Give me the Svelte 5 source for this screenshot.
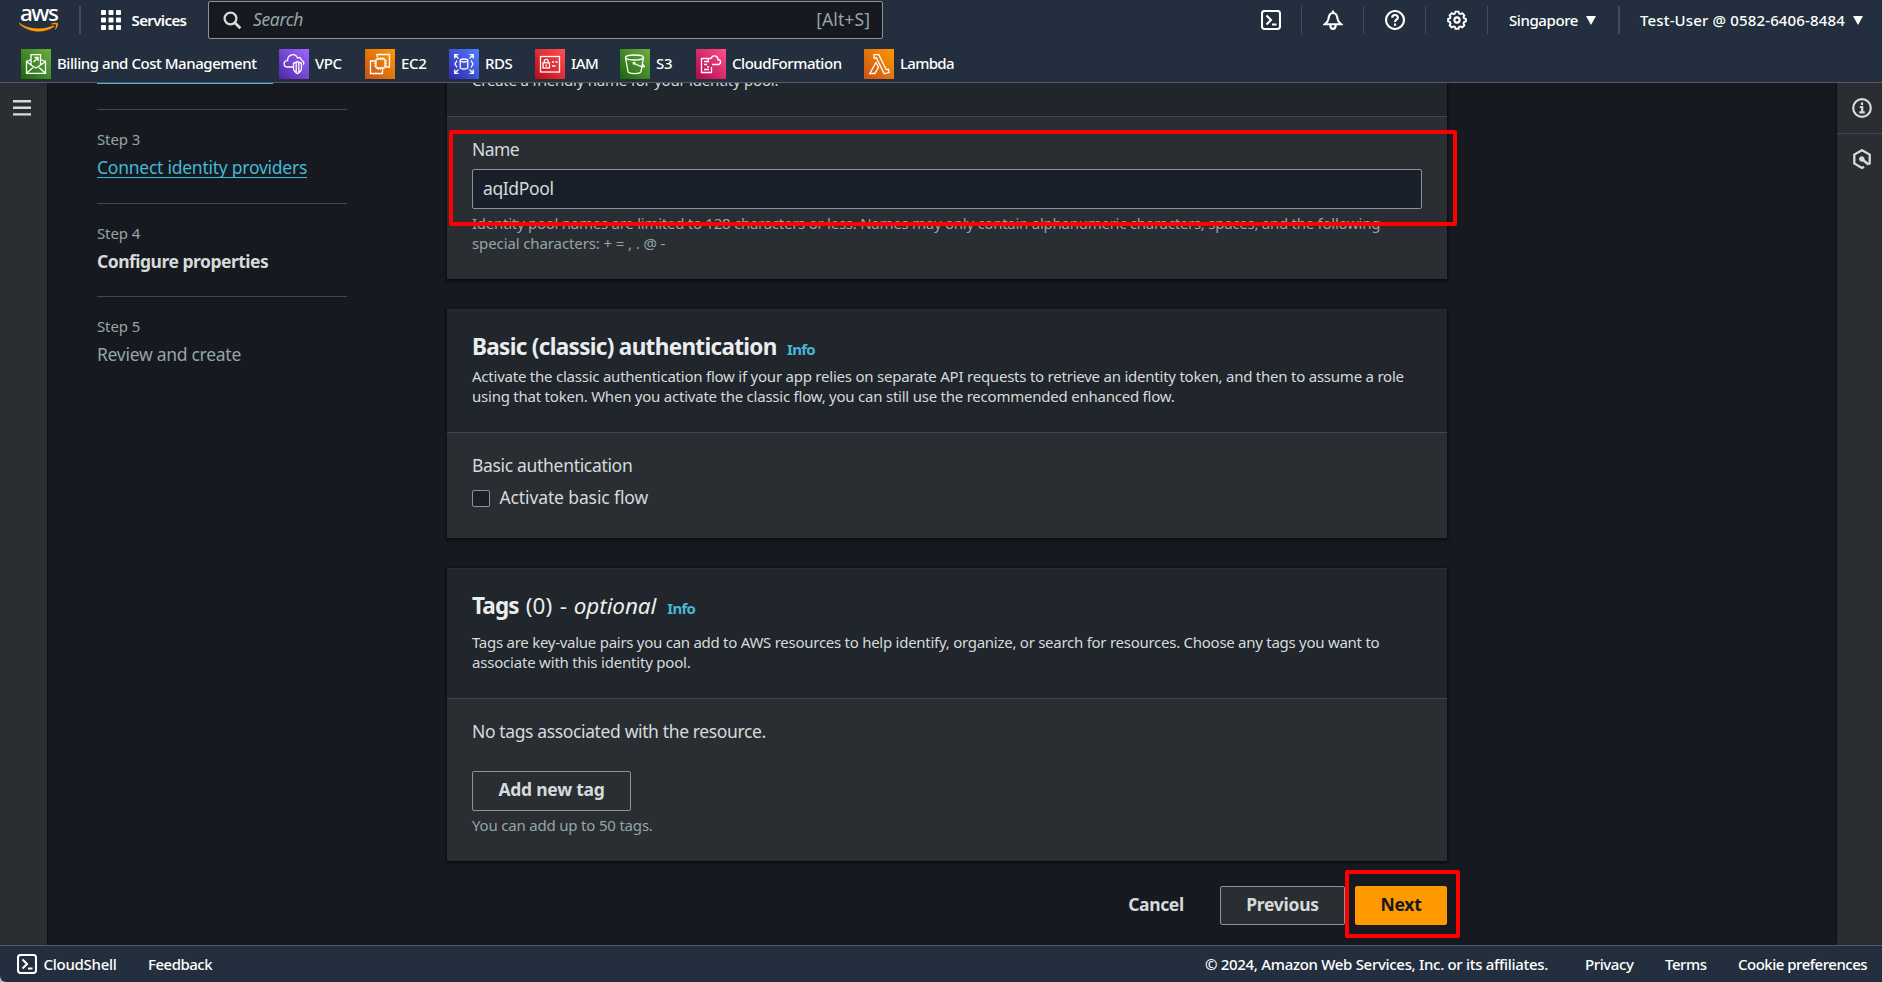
<script>
  const favorites = [
    { id: 'billing', label: 'Billing and Cost Management', width: 200, ls: -0.45, from: '#1b660f', to: '#6cae3e' },
    { id: 'vpc', label: 'VPC', width: 28, ls: -0.4, from: '#4d27a8', to: '#a166ff' },
    { id: 'ec2', label: 'EC2', width: 26, ls: -0.3, from: '#c8511b', to: '#ff9900' },
    { id: 'rds', label: 'RDS', width: 28, ls: -0.5, from: '#2e27ad', to: '#527fff' },
    { id: 'iam', label: 'IAM', width: 27, ls: -0.6, from: '#bd0816', to: '#ff5252' },
    { id: 's3', label: 'S3', width: 18, ls: -0.2, from: '#1b660f', to: '#6cae3e' },
    { id: 'cfn', label: 'CloudFormation', width: 110, ls: -0.46, from: '#b0084d', to: '#ff4f8b' },
    { id: 'lambda', label: 'Lambda', width: 54, ls: -0.7, from: '#c8511b', to: '#ff9900' }
  ];
  const steps = [
    { label: '', title: 'Configure permissions', kind: 'link', ls: -0.45, height: 94 },
    { label: 'Step 3', title: 'Connect identity providers', kind: 'link', ls: -0.25, height: 94 },
    { label: 'Step 4', title: 'Configure properties', kind: 'current', ls: -0.5, height: 93 },
    { label: 'Step 5', title: 'Review and create', kind: 'pending', ls: -0.28, height: 93 }
  ];
  let poolName = $state('aqIdPool');
  let basicFlow = $state(false);
</script>

{#snippet shellIcon()}
  <svg class="stroke" width="20" height="20" viewBox="0 0 20 20"><rect x="1" y="1" width="18" height="18" rx="2.5" /><path d="M5.500 5.500l4.500 4.500-4.500 4.500M11 14.500h4.500" /></svg>
{/snippet}

<div class="page">
  <header>
    <div class="topbar">
      <div class="logo">
        <span>aws</span>
        <svg width="40" height="11" viewBox="0 0 40 11"><path d="M.4 1.1C6 4.800 12.500 6.600 19.500 6.600c5 0 10.300-1 15-3 .9-.3 1.400.6.6 1.200C31 8 25 9.500 19.800 9.500 12.500 9.500 5.500 6.700.2 1.900c-.4-.5-.2-1 .2-.8z" fill="#f90" /><path d="M37 2.700c-.6-.7-3.500-.4-4.700-.2-.5 0-.5-.4-.1-.7 2.400-1.600 6.200-1.100 6.600-.6.500.6-.1 4.500-2.300 6.300-.4.300-.7.100-.5-.3.500-1.200 1.600-3.800 1-4.500z" fill="#f90" /></svg>
      </div>
      <div class="services">
        <svg width="20" height="20" viewBox="0 0 20 20" fill="#fff">
          {#each [0, 7.5, 15] as y}{#each [0, 7.5, 15] as x}<rect {x} {y} width="5" height="5" rx=".8" />{/each}{/each}
        </svg>
        <span>Services</span>
      </div>
      <div class="search">
        <svg width="19" height="19" viewBox="0 0 19 19" fill="none" stroke="#d5dbdb" stroke-width="2.300"><circle cx="7.500" cy="7.500" r="5.900" /><path d="M11.800 11.800l5.600 5.400" stroke-width="2.800" /></svg>
        <em>Search</em>
        <span class="keys">[Alt+S]</span>
      </div>
      <div class="tools">
        <span class="tool">{@render shellIcon()}</span>
        <span class="tool"><svg class="stroke" width="20" height="20" viewBox="0 0 20 20"><path d="M10 .5v2M2 14.200h16c-1.800-1.200-3-2.600-3.400-5C14.200 5.500 13 3 10 3S5.800 5.500 5.400 9.200c-.4 2.400-1.600 3.800-3.400 5z" /><path d="M7.300 15c0 5.200 5.400 5.200 5.400 0" /></svg></span>
        <span class="tool"><svg class="stroke" width="20" height="20" viewBox="0 0 20 20"><circle cx="10" cy="10" r="9" /><path d="M7.200 7.700c0-3.500 5.700-3.500 5.700-.2 0 2.200-2.900 2.200-2.900 4.500M10 13.500v2.200" /></svg></span>
        <span class="tool"><svg class="stroke" width="20" height="20" viewBox="0 0 20 20"><path d="M8.300 1h3.400l.6 2.100 1.600.6 2-1 2.300 2.400-1 1.900.7 1.600 2 .5v2.800l-2 .7-.7 1.600 1 2-2.300 2.300-2-1-1.600.6-.6 2H8.300l-.6-2-1.600-.6-2 1-2.300-2.300 1-2-.7-1.600-2-.7V9.100l2-.5.7-1.600-1-1.900 2.300-2.400 2 1 1.600-.6z" transform="translate(1 .7) scale(.9)" /><circle cx="10" cy="10" r="2.600" /></svg></span>
        <span class="region">Singapore<svg width="10" height="9" viewBox="0 0 10 9"><path d="M0 0h10L5 9z" fill="#fff" /></svg></span>
        <span class="account">Test-User @ 0582-6406-8484<svg width="10" height="9" viewBox="0 0 10 9"><path d="M0 0h10L5 9z" fill="#fff" /></svg></span>
      </div>
    </div>
    <nav class="favorites">
      {#each favorites as f}
        <a href="#{f.id}">
          <svg width="30" height="30" viewBox="0 0 30 30" fill="none" stroke="#fff" stroke-width="1.300">
            <defs><linearGradient id="g-{f.id}" x1="0" y1="1" x2="1" y2="0"><stop stop-color={f.from} /><stop offset="1" stop-color={f.to} /></linearGradient></defs>
            <rect width="30" height="30" fill="url(#g-{f.id})" stroke="none" />
            {#if f.id === 'billing'}
              <path d="M10 16V5.700h9.500V16M5.500 12.500v11.800h19V12.500L19.500 16l-4.500 3-5-3zM5.500 24.300L12 18.500M24.500 24.300L18 18.500M10 10.500l-4.500 2M19.500 10.500l5 2M12.500 13l4.500-4.500M13.500 8.500H17V12" />
            {:else if f.id === 'vpc'}
              <path d="M14.500 18H8.800C3.700 17.800 4.200 11.500 8.600 11.600 8.400 5 16.500 3.500 18.500 9c2.400-1.300 4 .3 3.800 2.400M22.500 11.300c2.600.8 2.700 3 1.800 4.200" />
              <path d="M18.500 12.700l-4 1.600v4.500c0 2.800 1.500 4.700 4 5.800 2.500-1.100 4-3 4-5.800v-4.500zM17.200 13.400v10.400M19.800 13.400v10.400" />
            {:else if f.id === 'ec2'}
              <path d="M12 8V5.500h12.500V18H21M9.500 12h-4v12.500h12V21" />
              <rect x="11" y="10" width="9" height="9" rx="1" />
              <path d="M13.200 10V8.200M15.500 10V8.200M17.800 10V8.200M13.200 19v1.800M15.500 19v1.800M17.800 19v1.800M11 12.200H9.200M11 14.500H9.200M11 16.800H9.200M20 12.200h1.800M20 14.500h1.800M20 16.800h1.800" />
            {:else if f.id === 'rds'}
              <path d="M5.700 9.500V5.700h3.800M5.700 5.700l3.800 3.800M20.500 5.700h3.800v3.800M24.300 5.700l-3.800 3.800M5.700 20.500v3.800h3.800M5.700 24.300l3.800-3.800M20.500 24.300h3.800v-3.800M24.300 24.300l-3.800-3.800M8 11.500L6 15l2 3.500M22 11.500l2 3.500-2 3.500" />
              <ellipse cx="15" cy="11.500" rx="3.800" ry="1.500" /><path d="M11.200 11.500v7c0 2 7.600 2 7.600 0v-7" />
            {:else if f.id === 'iam'}
              <rect x="5.500" y="7.500" width="19" height="15.500" /><rect x="8" y="13.800" width="6.500" height="5.200" /><path d="M9.300 13.800v-1.500c0-2.600 3.900-2.600 3.900 0v1.500M11.200 15.500v2M17 13h2M20.500 13h2M17 17h3.500" />
            {:else if f.id === 's3'}
              <ellipse cx="14.500" cy="8.500" rx="9" ry="2.500" /><path d="M5.500 8.500l2.500 14c.2 2.700 12.800 2.700 13 0l2.500-14M14.500 14.500c2 1.200 5 2.600 8 3.300 2.700.4 2.500-.8-.5-3" /><circle cx="14" cy="14.300" r=".8" />
            {:else if f.id === 'cfn'}
              <path d="M14 9.500H5.500v14h10V18M8 12.500h5M8 15.500h3M8 20.500h5M11 18h2M16 15.500h6.500c3-.6 2.700-5-.6-5 .1-4-5.600-5-6.600-1.200-2.300-.6-3.300 1-3 2.400" />
            {:else}
              <path d="M10 5.600h4.800l7.500 15.200 2-.7.900 3.200-5 1.500-7-14.300L12.500 9H10zM12 13.500L5.800 24.500h5l3.700-6.200z" />
            {/if}
          </svg>
          <span style:width="{f.width}px" style:letter-spacing="{f.ls}px">{f.label}</span>
        </a>
      {/each}
    </nav>
  </header>

  <div class="middle">
    <aside class="rail left"><svg width="18" height="16" viewBox="0 0 18 16" fill="#d5dbdb"><path d="M0 0h18v2.400H0zM0 6.600h18V9H0zM0 13.200h18v2.400H0z" /></svg></aside>

    <div class="content">
      <ol class="steps">
        {#each steps as s}
          <li style:height="{s.height}px">
            <small>{s.label}</small>
            <span class={s.kind} style:letter-spacing="{s.ls}px">{s.title}</span>
          </li>
        {/each}
      </ol>

      <main>
        <section class="card first">
          <div class="head"><p class="create">Create a friendly name for your identity pool.</p></div>
          <div class="body">
            <label for="pool" class="name">Name</label>
            <input id="pool" bind:value={poolName} />
            <p class="hint">Identity pool names are limited to 128 characters or less. Names may only contain alphanumeric characters, spaces, and the following<br /><span>special characters: + = , . @ -</span></p>
          </div>
          <i class="mark name-mark"></i>
        </section>

        <section class="card">
          <div class="head">
            <h2><b class="basic">Basic (classic) authentication</b><a href="#basic">Info</a></h2>
            <p>Activate the classic authentication flow if your app relies on separate API requests to retrieve an identity token, and then to assume a role<br />using that token. When you activate the classic flow, you can still use the recommended enhanced flow.</p>
          </div>
          <div class="body auth">
            <div class="field">Basic authentication</div>
            <label class="check"><input type="checkbox" bind:checked={basicFlow} />Activate basic flow</label>
          </div>
        </section>

        <section class="card">
          <div class="head tags">
            <h2><b>Tags</b><span class="count">(0)</span><span class="dash">-</span><em>optional</em><a href="#tags">Info</a></h2>
            <p>Tags are key-value pairs you can add to AWS resources to help identify, organize, or search for resources. Choose any tags you want to<br /><span>associate with this identity pool.</span></p>
          </div>
          <div class="body">
            <div class="none">No tags associated with the resource.</div>
            <button class="add">Add new tag</button>
            <p class="hint limit">You can add up to 50 tags.</p>
          </div>
        </section>

        <div class="actions">
          <button class="cancel">Cancel</button>
          <button class="previous">Previous</button>
          <button class="next">Next<i class="mark next-mark"></i></button>
        </div>
      </main>
    </div>

    <aside class="rail right">
      <span><svg width="20" height="20" viewBox="0 0 20 20" fill="none" stroke="#d5dbdb" stroke-width="2.200"><circle cx="10" cy="10" r="8.800" /><path d="M10 4.500v2.600M7.700 9h2.500v5M7.300 14.300h5.500" /></svg></span>
      <span><svg width="20" height="20" viewBox="0 0 20 20" fill="none" stroke="#d5dbdb" stroke-width="2.300"><path d="M12 17.800L10 19l-7.700-4.600V5.600L10 1.200l7.700 4.400v8.800l-1.200.8" /><path d="M10.500 10.500l6 5" stroke-width="2.600" /><circle cx="9.800" cy="10" r="2.300" fill="#d5dbdb" stroke-width="1" /></svg></span>
    </aside>
  </div>

  <footer>
    {@render shellIcon()}
    <span class="cloudshell">CloudShell</span>
    <span class="feedback">Feedback</span>
    <span class="copy">© 2024, Amazon Web Services, Inc. or its affiliates.</span>
    <span class="privacy">Privacy</span>
    <span class="terms">Terms</span>
    <span class="cookie">Cookie preferences</span>
  </footer>
</div>

<style>
  :global(body) { background: #a9c4d4; overflow: hidden; }
  .page, .page * { box-sizing: border-box; }
  .page {
    width: 1882px; height: 982px; display: flex; flex-direction: column; overflow: hidden;
    font: 17.5px/25px "Noto Sans", sans-serif; color: #d5dbdb; white-space: nowrap;
  }
  svg { display: block; flex: none; }
  .stroke { fill: none; stroke: #fff; stroke-width: 2.1; }
  p, h2, ol { margin: 0; padding: 0; }
  a { text-decoration: none; }

  header { height: 83px; flex: none; background: #232f3e; border-bottom: 1px solid #545b64; color: #fff; font-size: 15px; font-weight: 500; }
  .topbar { height: 40px; display: flex; align-items: center; }
  .logo { width: 81px; height: 28px; padding-left: 19px; border-right: 2px solid #414d5c; }
  .logo span { display: block; margin-top: -6px; height: 22px; padding-left: 1px; font-size: 22.5px; line-height: 26px; letter-spacing: -1.5px; }
  .services { width: 127px; padding-left: 20px; display: flex; gap: 10.5px; align-items: center; font-weight: 600; letter-spacing: -0.6px; }
  .services span { padding-top: 1px; }
  .search { width: 675px; height: 38px; display: flex; align-items: center; padding: 0 12px 0 14px; background: #16191f; border: 1px solid #879596; border-radius: 2px; color: #95a5a6; font-size: 17.5px; font-weight: 400; }
  .search em { margin-left: 11px; letter-spacing: -0.35px; }
  .search em, .keys { padding-bottom: 1px; }
  .keys { margin-left: auto; letter-spacing: 0.1px; }
  .tools { margin-left: 357px; display: flex; align-items: center; height: 28px; }
  .tool { width: 62px; height: 28px; display: grid; place-items: center; border-right: 1px solid #414d5c; }
  .region { width: 132px; height: 28px; padding: 1px 0 0 21px; display: flex; align-items: center; gap: 8px; border-right: 2px solid #414d5c; letter-spacing: -0.41px; }
  .account { padding: 1px 0 0 20px; display: flex; align-items: center; gap: 8px; letter-spacing: 0.15px; }
  .favorites { display: flex; gap: 22px; padding: 9px 0 0 21px; }
  .favorites a { display: flex; align-items: center; gap: 6px; color: #fff; }
  .favorites span { padding-bottom: 2px; }

  .middle { flex: 1; min-height: 0; display: flex; background: #16191f; overflow: hidden; }
  .rail { width: 47px; flex: none; background: #2a2e33; box-shadow: 0 0 2px #000; }
  .left { padding: 17px 0 0 13px; }
  .right { width: 45px; margin-left: auto; }
  .right span { display: grid; place-items: center; height: 51px; padding-left: 4px; border-bottom: 1px solid #414750; }
  .right span + span { height: 50px; border: 0; }
  .content { display: flex; gap: 100px; padding-left: 50px; }

  .steps { width: 250px; list-style: none; margin-top: -67px; }
  li { padding-top: 19px; border-bottom: 1px solid #414750; }
  li:last-child { border: 0; }
  small { display: block; height: 20px; font-size: 15px; line-height: 20px; color: #95a5a6; letter-spacing: -0.12px; margin-bottom: 6px; }
  .link { color: #44b9d6; text-decoration: underline 1px; text-underline-offset: 3px; text-decoration-skip-ink: none; }
  .current { font-weight: 700; }
  .pending { color: #95a5a6; }

  main { width: 1000px; }
  .card { position: relative; margin-bottom: 30px; background: #2a2e33; box-shadow: 0 1px 2px 1px #0b0d10; }
  .first { margin-top: -35px; }
  .head { padding: 22px 25px 26px; background: #21252c; border-bottom: 1px solid #414750; box-shadow: inset 0 1px #2a2e33; font-size: 15px; line-height: 20px; }
  .head p { letter-spacing: -0.23px; }
  .tags p { letter-spacing: -0.266px; margin-top: 12px; }
  .tags p span { letter-spacing: -0.2px; }
  h2 { display: flex; align-items: baseline; height: 30px; padding-top: 1px; margin-bottom: 5px; font-size: 22.5px; line-height: 30px; font-weight: 400; color: #eaeded; }
  h2 b { letter-spacing: -0.85px; }
  h2 .basic { width: 315px; letter-spacing: -0.68px; }
  h2 .count { margin-left: 7px; width: 34px; letter-spacing: 0; }
  h2 .dash { width: 14px; }
  h2 em { width: 93.5px; letter-spacing: -0.1px; }
  h2 a { font-size: 15px; font-weight: 700; color: #44b9d6; letter-spacing: -0.7px; }
  .body { padding: 20px 25px 26px; }
  .name { display: block; letter-spacing: -0.6px; margin-bottom: 7px; }
  #pool { display: block; width: 950px; height: 40px; padding: 0 10px 2px; background: #1a2029; border: 1px solid #879596; border-radius: 2px; color: #d5dbdb; font: inherit; letter-spacing: -0.38px; outline: 0; }
  .hint { margin-top: 4px; font-size: 15px; line-height: 20px; color: #95a5a6; letter-spacing: -0.258px; }
  .hint span { letter-spacing: -0.11px; }
  .limit { letter-spacing: -0.19px; }
  .auth { padding-bottom: 28px; }
  .field { letter-spacing: -0.32px; margin-bottom: 7px; }
  .check { display: flex; align-items: center; gap: 10px; letter-spacing: -0.12px; }
  .check input { appearance: none; width: 17.5px; height: 17.5px; margin: 2px 0 0; background: #1a2029; border: 1px solid #879596; border-radius: 2px; }
  .none { letter-spacing: -0.37px; margin-bottom: 27px; }
  button { position: relative; height: 39px; padding: 0 0 1px; border: 1px solid #879596; border-radius: 2px; background: transparent; color: #d5dbdb; font: 700 17.5px/25px "Noto Sans", sans-serif; letter-spacing: -0.26px; }
  .add { display: block; width: 159px; height: 40px; padding-bottom: 3px; }
  .actions { display: flex; justify-content: flex-end; gap: 10px; margin-top: -5px; }
  .actions button { padding-bottom: 2px; }
  .cancel { width: 108px; border-color: transparent; letter-spacing: -0.38px; }
  .previous { width: 125px; background: #2a2e33; }
  .next { width: 92px; background: #f90; border-color: #f90; color: #16191f; }
  .mark { position: absolute; border: 4px solid #f00; border-radius: 2px; }
  .name-mark { left: 1.5px; top: 81.5px; width: 1008px; height: 96px; }
  .next-mark { left: -11px; top: -17px; width: 115px; height: 68px; }

  footer { height: 37px; flex: none; display: flex; align-items: center; padding: 0 15px 0 17px; background: #232f3e; border-top: 1px solid #545b64; border-bottom-left-radius: 6px; color: #fff; font-size: 15px; font-weight: 500; }
  .cloudshell { margin-left: 6.5px; width: 104.5px; letter-spacing: -0.28px; }
  .feedback { letter-spacing: -0.5px; }
  .copy { margin-left: auto; width: 380px; letter-spacing: -0.31px; }
  .privacy { width: 80px; letter-spacing: -0.4px; }
  .terms { width: 73px; letter-spacing: -0.45px; }
  .cookie { width: 129px; letter-spacing: -0.5px; }
</style>
